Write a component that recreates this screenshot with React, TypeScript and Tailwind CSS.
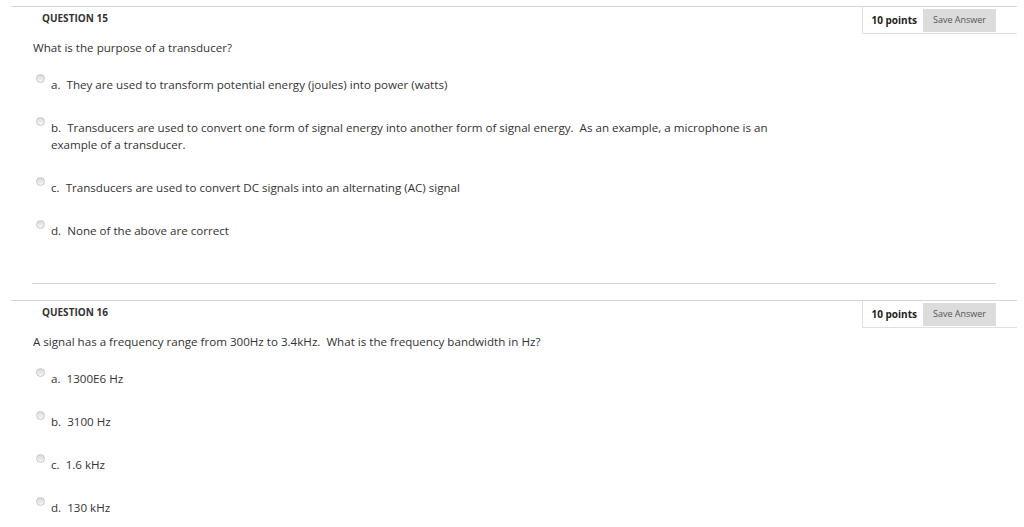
import React from "react";

type Question = {
  num: number;
  text: string;
  options: string[];
};

const questions: Question[] = [
  {
    num: 15,
    text: "What is the purpose of a transducer?",
    options: [
      "They are used to transform potential energy (joules) into power (watts)",
      "Transducers are used to convert one form of signal energy into another form of signal energy.\u00a0 As an example, a microphone is an example of a transducer.",
      "Transducers are used to convert DC signals into an alternating (AC) signal",
      "None of the above are correct",
    ],
  },
  {
    num: 16,
    text: "A signal has a frequency range from 300Hz to 3.4kHz.\u00a0 What is the frequency bandwidth in Hz?",
    options: ["1300E6 Hz", "3100 Hz", "1.6 kHz", "130 kHz"],
  },
];

const letters = ["a", "b", "c", "d"];

function Radio() {
  return (
    <span className="mt-[-2px] block h-[9px] w-[9px] shrink-0 rounded-full border border-[#c9c9c9] bg-gradient-to-b from-[#d9d9d9] to-[#f7f7f7]" />
  );
}

function QuestionBlock({ q, last }: { q: Question; last: boolean }) {
  return (
    <div className="border-t border-[#d6d6d6]">
      {/* Header */}
      <div className="flex items-start justify-between">
        <h2 className="pl-[31px] pt-[4px] text-[10px] font-bold leading-[14px] text-[#333]">
          QUESTION {q.num}
        </h2>
        <div className="flex h-[27px] items-center border-b border-l border-[#e0e0e0] pl-[9px] pr-[21px]">
          <span className="text-[10px] font-bold text-[#222]">10 points</span>
          <button className="ml-[6px] flex h-[23px] w-[73px] items-center justify-center bg-[#dcdcdc] text-[9px] text-[#555]">
            Save Answer
          </button>
        </div>
      </div>

      {/* Question text */}
      <p className="pl-[22px] pt-[5px] text-[11.6px] leading-[17px] text-[#333]">{q.text}</p>

      {/* Options */}
      <ul className="mt-[20px] flex flex-col gap-[26px] pl-[25px]">
        {q.options.map((opt, i) => (
          <li key={i} className="flex items-start gap-[6px] text-[11.6px] leading-[17px] text-[#333]">
            <Radio />
            <span className="w-[730px]">
              {letters[i]}.&nbsp; {opt}
            </span>
          </li>
        ))}
      </ul>

      {!last && <div className="ml-[21px] mr-[21px] mt-[44px] mb-[16px] border-t border-[#d6d6d6]" />}
    </div>
  );
}

export default function App() {
  return (
    <div
      className="min-h-[527px] bg-white pl-[11px] pr-[7px] pt-[6px]"
      style={{ fontFamily: '"Open Sans", "Liberation Sans", sans-serif' }}
    >
      {questions.map((q, i) => (
        <QuestionBlock key={q.num} q={q} last={i === questions.length - 1} />
      ))}
    </div>
  );
}
